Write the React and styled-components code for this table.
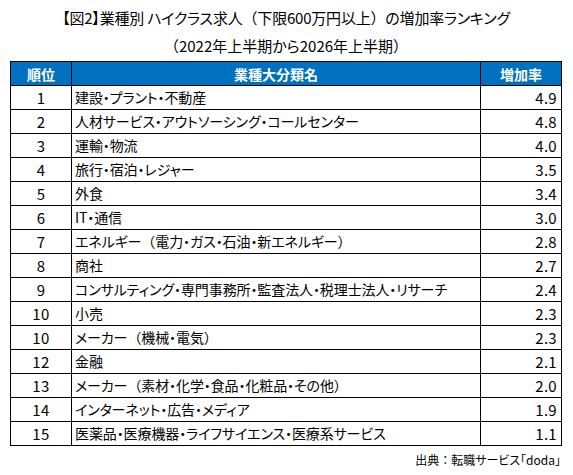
import React from 'react';
import styled, { createGlobalStyle } from 'styled-components';

const GlobalStyle = createGlobalStyle`
    body {
        margin: 0;
        background: #ffffff;
        font-family: "Noto Sans CJK JP", "Noto Sans", sans-serif;
        color: #000000;
    }
`;

const Page = styled.div`
    width: 573px;
    height: 475px;
    padding: 4px 11px 0 10px;
    box-sizing: border-box;
    font-feature-settings: "palt";
`;

const Title = styled.div`
    text-align: center;
    font-size: 15px;
    line-height: 28px;
`;

const TitleLine = styled.div`
    letter-spacing: ${(p) => p.$tight ? '-0.2px' : '0'};
`;

// full-width brackets keep their full width, as in the source sheet
const Wide = styled.span`
    font-feature-settings: normal;
`;

const Table = styled.table`
    margin-top: 1px;
    width: 552px;
    border-collapse: collapse;
    table-layout: fixed;
    font-size: 14px;
`;

const Head = styled.th`
    background-color: #0070c0;
    color: #ffffff;
    font-weight: bold;
    height: 23px;
    padding: 0;
    border: 1px solid #000000;
    text-align: center;
    width: ${(p) => p.$w || 'auto'};
`;

const Cell = styled.td`
    height: 23px;
    padding: 0 ${(p) => (p.$align === 'right' ? '4px' : '3px')};
    border: 1px solid #000000;
    text-align: ${(p) => p.$align || 'left'};
    white-space: nowrap;
    line-height: 23px;
    font-size: ${(p) => (p.$num ? '15px' : '14px')};
    letter-spacing: ${(p) => (p.$num ? '0.3px' : '-0.1px')};
`;

const Source = styled.div`
    text-align: right;
    font-size: 12px;
    margin-top: 5px;
    padding-right: 1px;
`;

const rows = [
    ['1', '建設・プラント・不動産', '4.9'],
    ['2', '人材サービス・アウトソーシング・コールセンター', '4.8'],
    ['3', '運輸・物流', '4.0'],
    ['4', '旅行・宿泊・レジャー', '3.5'],
    ['5', '外食', '3.4'],
    ['6', 'IT・通信', '3.0'],
    ['7', 'エネルギー（電力・ガス・石油・新エネルギー）', '2.8'],
    ['8', '商社', '2.7'],
    ['9', 'コンサルティング・専門事務所・監査法人・税理士法人・リサーチ', '2.4'],
    ['10', '小売', '2.3'],
    ['10', 'メーカー（機械・電気）', '2.3'],
    ['12', '金融', '2.1'],
    ['13', 'メーカー（素材・化学・食品・化粧品・その他）', '2.0'],
    ['14', 'インターネット・広告・メディア', '1.9'],
    ['15', '医薬品・医療機器・ライフサイエンス・医療系サービス', '1.1'],
];

function Text({ children }) {
    return children.split(/([（）：])/).map((part, i) =>
        /^[（）：]$/.test(part) ? <Wide key={i}>{part}</Wide> : part
    );
}

export default function App() {
    return (
        <Page>
            <GlobalStyle />
            <Title>
                <TitleLine $tight>
                    <Text>【図2】業種別 ハイクラス求人（下限600万円以上）の増加率ランキング</Text>
                </TitleLine>
                <TitleLine>
                    <Text>（2022年上半期から2026年上半期）</Text>
                </TitleLine>
            </Title>
            <Table>
                <thead>
                    <tr>
                        <Head $w="60px">順位</Head>
                        <Head>業種大分類名</Head>
                        <Head $w="80px">増加率</Head>
                    </tr>
                </thead>
                <tbody>
                    {rows.map((r, i) => (
                        <tr key={i}>
                            <Cell $align="center" $num>{r[0]}</Cell>
                            <Cell><Text>{r[1]}</Text></Cell>
                            <Cell $align="right" $num>{r[2]}</Cell>
                        </tr>
                    ))}
                </tbody>
            </Table>
            <Source><Text>出典：転職サービス「doda」</Text></Source>
        </Page>
    );
}
